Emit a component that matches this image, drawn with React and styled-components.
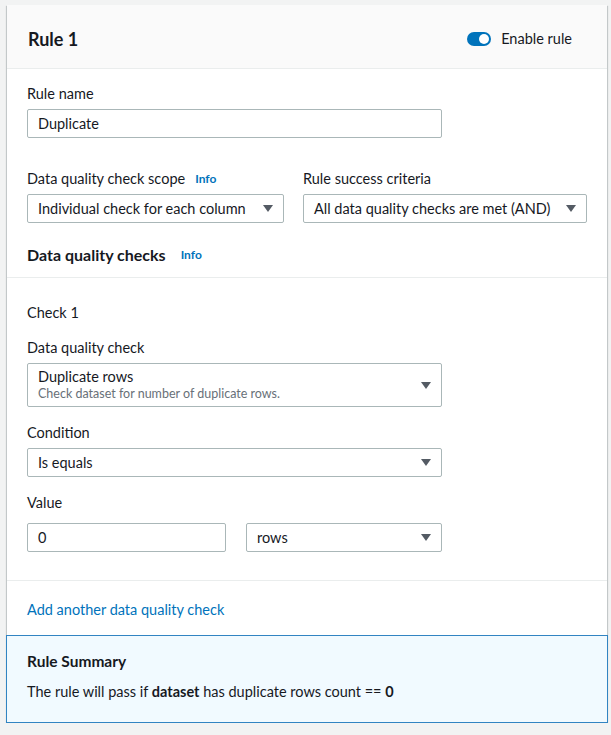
import React from "react";
import styled, { createGlobalStyle } from "styled-components";

const GlobalStyle = createGlobalStyle`
  body {
    margin: 0;
    background: #f2f3f3;
    font-family: Lato, "Open Sans", Arial, sans-serif;
    color: #16191f;
    font-size: 14.5px;
  }
`;

const Card = styled.div`
  width: 600px;
  margin: 5px 0 0 7px;
  background: #fff;
  box-shadow: 0 1px 1px 0 rgba(0, 28, 36, 0.3), 1px 1px 1px 0 rgba(0, 28, 36, 0.15),
    -1px 1px 1px 0 rgba(0, 28, 36, 0.15);
`;

const Header = styled.div`
  box-sizing: border-box;
  height: 64px;
  display: flex;
  align-items: center;
  justify-content: space-between;
  padding: 4px 35px 0 21px;
  background: #fafafa;
  border-bottom: 1px solid #eaeded;
`;

const Title = styled.h2`
  margin: 0;
  font-size: 18px;
  font-weight: 700;
`;

const ToggleWrap = styled.label`
  display: flex;
  align-items: center;
  gap: 10px;
`;

const Track = styled.span`
  position: relative;
  width: 24px;
  height: 14px;
  border-radius: 7px;
  background: ${(p) => (p.on ? "#0073bb" : "#aab7b8")};
`;

const Knob = styled.span`
  position: absolute;
  top: 2px;
  left: ${(p) => (p.on ? "12px" : "2px")};
  width: 10px;
  height: 10px;
  border-radius: 50%;
  background: #fff;
`;

const Section = styled.div`
  padding: ${(p) => p.pad};
  border-bottom: ${(p) => (p.last ? "none" : "1px solid #eaeded")};
`;

const Field = styled.div`
  display: flex;
  flex-direction: column;
  width: ${(p) => p.width || "auto"};
  margin-top: ${(p) => p.top || "0px"};
`;

const Label = styled.div`
  line-height: 22px;
  margin-bottom: ${(p) => p.gap || "4px"};
  display: flex;
  align-items: center;
  gap: 10px;
`;

const Info = styled.a`
  color: #0073bb;
  font-size: 12px;
  font-weight: 700;
  text-decoration: none;
`;

const Input = styled.div`
  box-sizing: border-box;
  height: 29px;
  width: ${(p) => p.width};
  border: 1px solid #aab7b8;
  border-radius: 2px;
  padding: 0 10px;
  display: flex;
  align-items: center;
`;

const Select = styled(Input)`
  justify-content: space-between;
  height: ${(p) => p.height || "29px"};
`;

const Caret = () => (
  <svg width="10" height="7" viewBox="0 0 10 7">
    <path d="M0 0h10L5 7z" fill="#545b64" />
  </svg>
);

const Row = styled.div`
  display: flex;
  gap: ${(p) => p.gap};
  margin-top: ${(p) => p.top || "0px"};
`;

const Heading = styled.div`
  margin-top: 21px;
  line-height: 22px;
  font-size: 16px;
  font-weight: 700;
  display: flex;
  align-items: center;
  gap: 15px;
`;

const Plain = styled.div`
  line-height: 22px;
`;

const OptionText = styled.div`
  display: flex;
  flex-direction: column;
  line-height: 17px;
`;

const Desc = styled.span`
  font-size: 12.5px;
  color: #687078;
`;

const Link = styled.a`
  color: #0073bb;
  line-height: 22px;
  text-decoration: none;
`;

const Summary = styled.div`
  box-sizing: border-box;
  height: 88px;
  margin-left: -1px;
  width: 602px;
  border: 1px solid #3184c2;
  background: #f1faff;
  padding: 14px 20px 0;
`;

const SummaryTitle = styled.div`
  font-weight: 700;
  font-size: 15.5px;
  line-height: 22px;
`;

const SummaryText = styled.div`
  margin-top: 9px;
  line-height: 22px;
`;

export default function App() {
  return (
    <>
      <GlobalStyle />
      <Card>
        <Header>
          <Title>Rule 1</Title>
          <ToggleWrap>
            <Track on>
              <Knob on />
            </Track>
            Enable rule
          </ToggleWrap>
        </Header>

        <Section pad="14px 20px 11px">
          <Field>
            <Label>Rule name</Label>
            <Input width="415px">Duplicate</Input>
          </Field>
          <Row gap="19px" top="30px">
            <Field width="257px">
              <Label>
                Data quality check scope <Info>Info</Info>
              </Label>
              <Select width="257px">
                Individual check for each column <Caret />
              </Select>
            </Field>
            <Field width="284px">
              <Label>Rule success criteria</Label>
              <Select width="284px">
                All data quality checks are met (AND) <Caret />
              </Select>
            </Field>
          </Row>
          <Heading>
            Data quality checks <Info>Info</Info>
          </Heading>
        </Section>

        <Section pad="24px 20px 28px">
          <Plain>Check 1</Plain>
          <Field top="13px">
            <Label>Data quality check</Label>
            <Select width="415px" height="44px">
              <OptionText>
                Duplicate rows
                <Desc>Check dataset for number of duplicate rows.</Desc>
              </OptionText>
              <Caret />
            </Select>
          </Field>
          <Field top="15px">
            <Label>Condition</Label>
            <Select width="415px">
              Is equals <Caret />
            </Select>
          </Field>
          <Field top="15px">
            <Label gap="9px">Value</Label>
            <Row gap="20px">
              <Input width="199px">0</Input>
              <Select width="196px">
                rows <Caret />
              </Select>
            </Row>
          </Field>
        </Section>

        <Section pad="18px 20px 14px" last>
          <Link>Add another data quality check</Link>
        </Section>

        <Summary>
          <SummaryTitle>Rule Summary</SummaryTitle>
          <SummaryText>
            The rule will pass if <b>dataset</b> has duplicate rows count == <b>0</b>
          </SummaryText>
        </Summary>
      </Card>
    </>
  );
}
